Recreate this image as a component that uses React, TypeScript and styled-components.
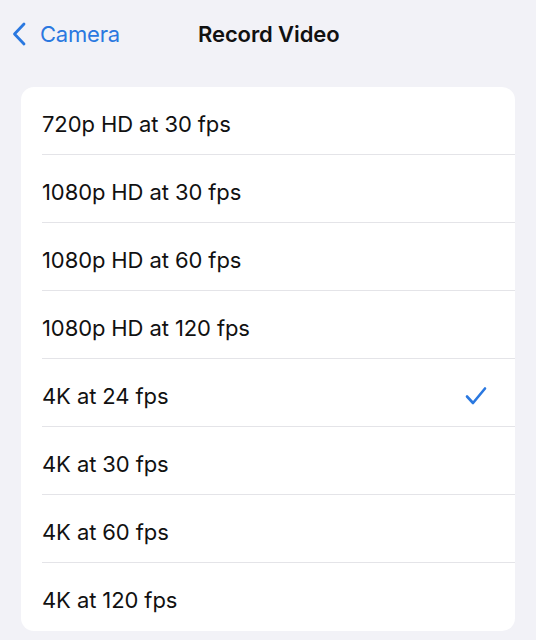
import React from "react";
import styled, { createGlobalStyle } from "styled-components";

const Global = createGlobalStyle`
  html, body { margin: 0; padding: 0; background: #f2f2f7; }
  body { font-family: Inter, "Noto Sans", sans-serif; -webkit-font-smoothing: antialiased; }
`;

const Page = styled.div`
  width: 536px;
  height: 640px;
  background: #f2f2f7;
  display: flex;
  flex-direction: column;
  overflow: hidden;
`;

const NavBar = styled.div`
  height: 68px;
  display: flex;
  align-items: center;
  position: relative;
  padding-left: 12px;
  box-sizing: border-box;
`;

const BackButton = styled.div`
  display: flex;
  align-items: center;
  gap: 14px;
  color: #2a78e0;
  font-size: 22px;
  letter-spacing: -0.2px;
`;

const Title = styled.div`
  position: absolute;
  left: 198px;
  top: 0;
  height: 68px;
  display: flex;
  align-items: center;
  font-size: 22px;
  font-weight: 600;
  color: #111;
  letter-spacing: -0.1px;
`;

const Card = styled.div`
  margin: 19px 21px 0 21px;
  background: #fff;
  border-radius: 13px;
  overflow: hidden;
`;

const Row = styled.div<{ $last?: boolean }>`
  height: 68px;
  display: flex;
  align-items: center;
  justify-content: space-between;
  margin-left: 21px;
  padding-top: 6px;
  padding-right: 28px;
  box-sizing: border-box;
  border-bottom: ${(p) => (p.$last ? "none" : "1.5px solid #e4e4e8")};
  font-size: 22px;
  color: #111;
  letter-spacing: -0.1px;
`;

const options = [
  "720p HD at 30 fps",
  "1080p HD at 30 fps",
  "1080p HD at 60 fps",
  "1080p HD at 120 fps",
  "4K at 24 fps",
  "4K at 30 fps",
  "4K at 60 fps",
  "4K at 120 fps",
];

const Chevron = () => (
  <svg width="14" height="24" viewBox="0 0 14 24">
    <path d="M12 2 L2.5 12 L12 22" fill="none" stroke="#2a78e0" strokeWidth="2.8" strokeLinecap="round" strokeLinejoin="round" />
  </svg>
);

const Check = () => (
  <svg width="22" height="20" viewBox="0 0 22 20">
    <path d="M2 10.5 L8 17 L20 2.5" fill="none" stroke="#2a78e0" strokeWidth="2.6" strokeLinecap="round" strokeLinejoin="round" />
  </svg>
);

export default function App() {
  return (
    <Page>
      <Global />
      <NavBar>
        <BackButton>
          <Chevron />
          <span>Camera</span>
        </BackButton>
        <Title>Record Video</Title>
      </NavBar>
      <Card>
        {options.map((o, i) => (
          <Row key={o} $last={i === options.length - 1}>
            <span>{o}</span>
            {o === "4K at 24 fps" && <Check />}
          </Row>
        ))}
      </Card>
    </Page>
  );
}
